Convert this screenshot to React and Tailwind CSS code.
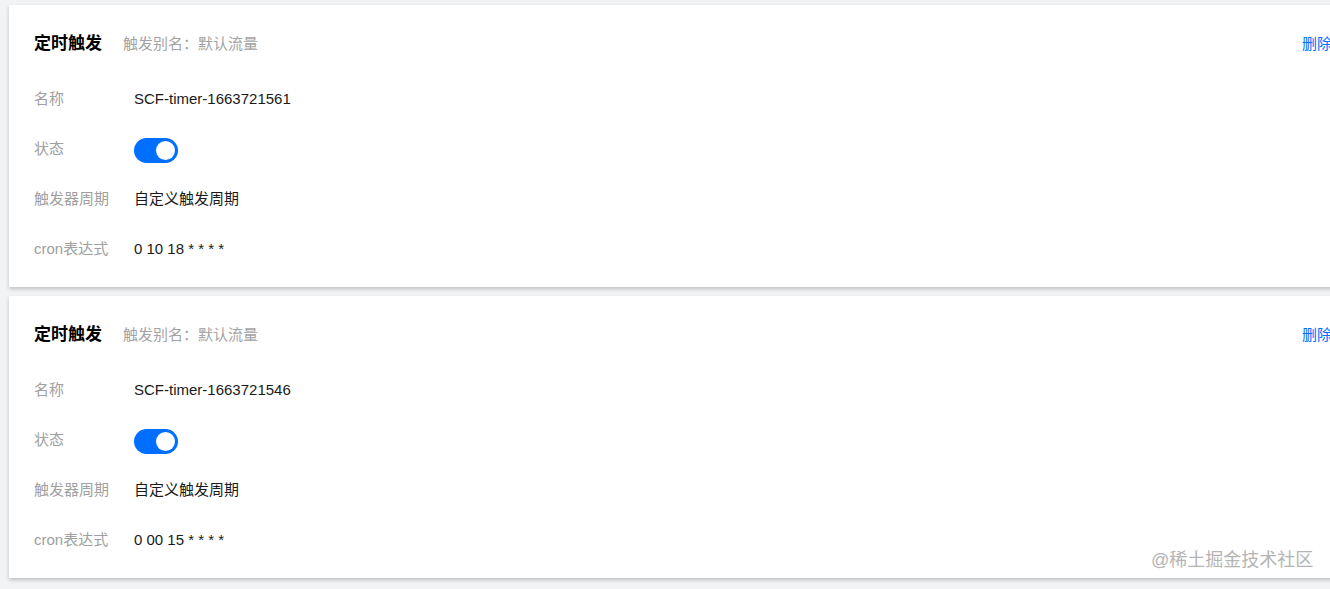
const triggers = [
  { name: 'SCF-timer-1663721561', cron: '0 10 18 * * * *' },
  { name: 'SCF-timer-1663721546', cron: '0 00 15 * * * *' },
];

function Toggle() {
  return (
    <div className="w-[44px] h-[25px] rounded-full bg-[#006eff] flex items-center justify-end pr-[3px]">
      <div className="w-[19px] h-[19px] rounded-full bg-white" />
    </div>
  );
}

function Row({ label, children }) {
  return (
    <div className="flex items-center h-[50px]">
      <div className="w-[100px] text-[#a0a0a0]">{label}</div>
      <div className="text-[#1a1a1a]">{children}</div>
    </div>
  );
}

function TriggerCard({ name, cron }) {
  return (
    <div className="ml-[9px] w-[1347px] bg-white shadow-[0_2px_4px_rgba(0,0,0,0.22)] pl-[25px] pr-[24px] pt-[29px] pb-[13px]">
      {/* header */}
      <div className="flex items-center h-[20px]">
        <span className="text-[17px] font-bold text-black">定时触发</span>
        <span className="ml-[21px] text-[#a3a3a3]">触发别名：默认流量</span>
        <span className="ml-auto text-[#006eff]">删除</span>
      </div>
      <div className="mt-[20px]">
        <Row label="名称">{name}</Row>
        <Row label="状态">
          <div className="pt-[2px]">
            <Toggle />
          </div>
        </Row>
        <Row label="触发器周期">自定义触发周期</Row>
        <Row label="cron表达式">{cron}</Row>
      </div>
    </div>
  );
}

export default function App() {
  return (
    <div
      className="relative w-[1330px] h-[589px] overflow-hidden bg-[#f2f3f5] text-[15px] pt-[5px]"
      style={{ fontFamily: '"Liberation Sans", "Noto Sans CJK SC", sans-serif' }}
    >
      <div className="flex flex-col gap-[9px]">
        {triggers.map((t) => (
          <TriggerCard key={t.name} {...t} />
        ))}
      </div>
      {/* watermark */}
      <div className="absolute left-[1151px] top-[548px] text-[18px] leading-[24px] text-[#b4b4b4]">
        @稀土掘金技术社区
      </div>
    </div>
  );
}
